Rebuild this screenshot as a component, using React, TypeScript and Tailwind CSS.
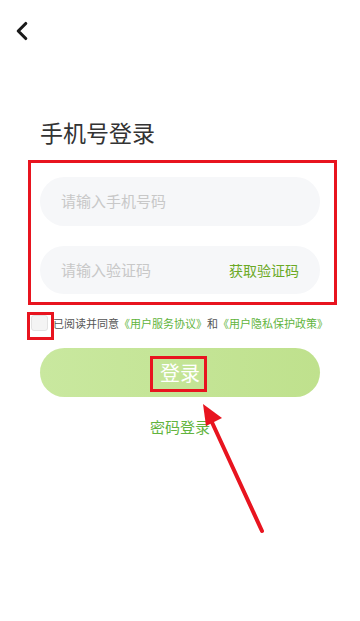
import { ChevronLeft } from "lucide-react"

export default function App() {
  return (
    <div
      className="relative w-full h-[621px] bg-white overflow-hidden"
      style={{ fontFamily: '"Noto Sans CJK SC", "Noto Sans", sans-serif' }}
    >
      {/* 顶部返回 */}
      <div className="h-[61px] flex items-center pl-[7px]">
        <ChevronLeft className="w-[30px] h-[30px] text-[#1a1a1a]" strokeWidth={2.5} />
      </div>

      <h1 className="pl-[40px] mt-[55px] text-[23px] leading-[32px] text-[#333333]">手机号登录</h1>

      {/* 表单 */}
      <div className="mt-[29px] px-[40px] flex flex-col gap-[20px]">
        <div className="h-[49px] rounded-full bg-[#f6f7f9] flex items-center px-[21px]">
          <span className="text-[15px] text-[#c8c8c8]">请输入手机号码</span>
        </div>
        <div className="h-[48px] rounded-full bg-[#f6f7f9] flex items-center justify-between pl-[21px] pr-[21px]">
          <span className="text-[15px] text-[#c8c8c8]">请输入验证码</span>
          <span className="text-[14px] text-[#6ba925]">获取验证码</span>
        </div>
      </div>

      {/* 协议 */}
      <div className="mt-[21px] pl-[31px] flex items-center gap-[5px]">
        <div className="w-[17px] h-[16px] rounded-[3px] border border-[#e2e2e2] bg-[#f4f4f4]" />
        <p className="text-[11px] leading-[16px] text-[#555555] whitespace-nowrap">
          已阅读并同意<span className="text-[#5fb43c]">《用户服务协议》</span>和<span className="text-[#5fb43c]">《用户隐私保护政策》</span>
        </p>
      </div>

      {/* 登录按钮 */}
      <div className="mt-[17px] px-[40px]">
        <div className="h-[49px] rounded-full bg-gradient-to-r from-[#c9e89f] to-[#bfe18d] flex items-center justify-center">
          <span className="text-[20px] text-white">登录</span>
        </div>
      </div>

      <div className="mt-[20px] text-center text-[15px] leading-[20px] text-[#62b43e]">密码登录</div>

      {/* 红色标注 */}
      <div className="absolute left-[28px] top-[160px] w-[309px] h-[145px] border-[3px] border-[#e8141f]" />
      <div className="absolute left-[27px] top-[312px] w-[27px] h-[28px] border-[3px] border-[#e8141f]" />
      <div className="absolute left-[150px] top-[356px] w-[57px] h-[36px] border-[3px] border-[#e8141f]" />
      <svg className="absolute left-0 top-0 pointer-events-none" width="360" height="621" viewBox="0 0 360 621">
        <line x1="262" y1="531" x2="210" y2="418" stroke="#e8141f" strokeWidth="4" strokeLinecap="round" />
        <polygon points="203,404 222,418 206,426" fill="#e8141f" />
      </svg>
    </div>
  )
}
